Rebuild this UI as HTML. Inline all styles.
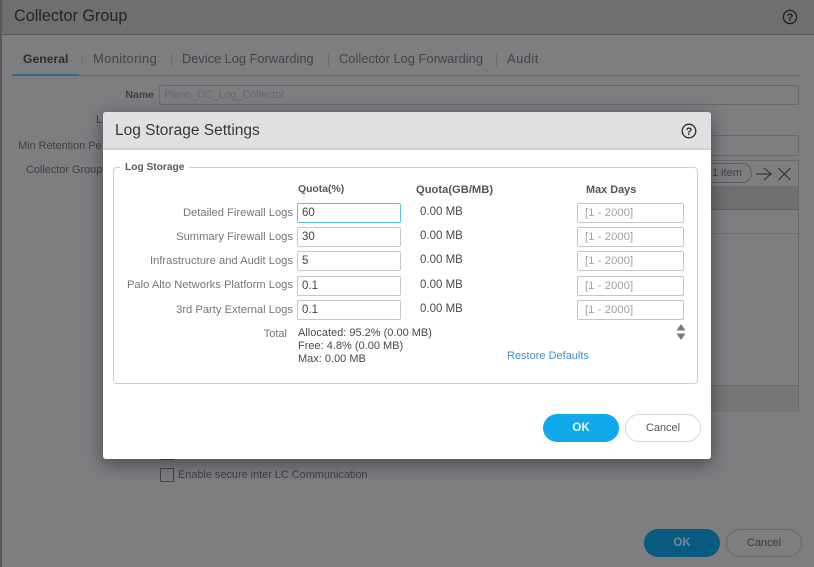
<!DOCTYPE html>
<html><head><meta charset="utf-8"><style>
html,body{margin:0;padding:0}
body{width:814px;height:567px;overflow:hidden;position:relative;background:#7f7d80;font-family:"Liberation Sans",sans-serif;font-size:11px;color:#333}
div,span{position:absolute;white-space:nowrap;box-sizing:border-box}
.tab{top:51px;font-size:12.9px;line-height:16px;color:#454447}
.sep{top:53px;width:1px;height:14px;background:#706f72}
.bl{text-align:right;line-height:14px;color:#403f42;font-size:10.9px}
.lbl{right:521px;text-align:right;line-height:14px;color:#77767a;font-size:11.2px;margin-top:1px}
.inp{left:297px;width:104px;height:20px;border:1px solid #c9c8c8;border-radius:2px;background:#fff;padding-left:4px;line-height:18px;color:#444;font-size:11.5px}
.mb{left:420px;line-height:14px;color:#4a4a4a;font-size:11.5px}
.md{left:577px;width:107px;height:20px;border:1px solid #c9c4c4;border-radius:2px;background:#fff;padding-left:7px;line-height:19px;color:#a3a3a3;font-size:11.4px}
.hd{top:183px;line-height:14px;font-weight:bold;color:#555}
.tot{left:298px;line-height:13px;color:#4a4a4a;font-size:11px}
</style></head><body>
<div style="left:0;top:0;width:2px;height:567px;background:#59585a"></div>
<div style="left:2px;top:0;width:812px;height:35px;background:#6f6e70;border-bottom:1px solid #59585b"></div>
<div style="left:14px;top:6px;font-size:16.2px;line-height:20px;color:#242326">Collector Group</div>
<svg style="position:absolute;left:782px;top:8.5px" width="16" height="16" viewBox="0 0 16 16"><circle cx="8" cy="8" r="6.6" fill="none" stroke="#1f1f21" stroke-width="1.3"/><text x="8" y="11.8" text-anchor="middle" font-family="Liberation Sans" font-size="11" font-weight="bold" fill="#1f1f21">?</text></svg>

<div class="tab" style="left:23px;font-weight:bold;color:#2e2d30;font-size:12.2px">General</div>
<div class="sep" style="left:82px"></div>
<div class="tab" style="left:93px;letter-spacing:.4px">Monitoring</div>
<div class="sep" style="left:171px"></div>
<div class="tab" style="left:182px;font-size:12.8px">Device Log Forwarding</div>
<div class="sep" style="left:328px"></div>
<div class="tab" style="left:339px">Collector Log Forwarding</div>
<div class="sep" style="left:496px"></div>
<div class="tab" style="left:507px;letter-spacing:.5px">Audit</div>
<div style="left:12px;top:75px;width:787px;height:1px;background:#676669"></div>
<div style="left:12px;top:74px;width:67px;height:2px;background:#2b6e86"></div>

<div class="bl" style="left:100px;width:54px;top:88px;font-weight:bold;font-size:10.5px">Name</div>
<div style="left:159px;top:85px;width:640px;height:20px;border:1px solid #6a696c;border-radius:2px;color:#66656a;font-size:10.7px;line-height:18px;padding-left:4px">Plano_DC_Log_Collector</div>
<div class="bl" style="left:96px;top:113px">L</div>
<div class="bl" style="left:18px;top:139px">Min Retention Pe</div>
<div class="bl" style="left:26px;top:163px">Collector Group</div>
<div style="left:700px;top:135px;width:99px;height:21px;border:1px solid #6a696c;border-radius:2px"></div>
<div style="left:700px;top:160px;width:99px;height:252px;border:1px solid #69686b"></div>
<div style="left:700px;top:186px;width:98px;height:24px;background:#6f6e70;border-bottom:1px solid #616063"></div>
<div style="left:700px;top:233px;width:98px;height:1px;background:#6f6e71"></div>
<div style="left:700px;top:385px;width:98px;height:27px;background:#767577;border-top:1px solid #69686b"></div>
<div style="left:690px;top:163px;width:62px;height:20px;border:1px solid #5e5d60;border-radius:10px"></div>
<div style="left:712px;top:166px;line-height:15px;font-size:11px;color:#3c3b3e">1 item</div>
<svg style="position:absolute;left:755px;top:165px" width="40" height="18" viewBox="0 0 40 18" fill="none" stroke="#2d2c2f" stroke-width="1"><path d="M1 9H16M9 3l7 6-7 6"/><path d="M23.500 3l12 12M35.500 3l-12 12"/></svg>

<div style="left:160px;top:468px;width:14px;height:14px;border:1px solid #444346;border-radius:1px"></div>
<div style="left:160px;top:452px;width:14px;height:8px;border:1px solid #444346"></div>
<div class="bl" style="left:178px;top:468px">Enable secure inter LC Communication</div>

<div style="left:644px;top:529px;width:76px;height:28px;border-radius:14px;background:#075a80;color:#6f8a98;font-weight:bold;text-align:center;line-height:28px;font-size:11.5px">OK</div>
<div style="left:726px;top:529px;width:76px;height:28px;border-radius:14px;border:1px solid #69686b;color:#3a393c;text-align:center;line-height:26px;font-size:11px">Cancel</div>

<!-- dialog -->
<div style="left:103px;top:112px;width:608px;height:347px;background:#fff;border-radius:3px;box-shadow:0 5px 18px rgba(30,30,32,.55)"></div>
<div style="left:103px;top:112px;width:608px;height:38px;background:#e0e0e2;border-bottom:2px solid #d2d2d4;border-radius:3px 3px 0 0"></div>
<div style="left:115px;top:121px;font-size:15.5px;line-height:20px;color:#38383b">Log Storage Settings</div>
<svg style="position:absolute;left:681px;top:123px" width="16" height="16" viewBox="0 0 16 16"><circle cx="8" cy="8" r="6.8" fill="none" stroke="#2c2c2e" stroke-width="1.3"/><text x="8" y="11.8" text-anchor="middle" font-family="Liberation Sans" font-size="11" font-weight="bold" fill="#2c2c2e">?</text></svg>

<div style="left:113px;top:167px;width:585px;height:217px;border:1px solid #cfcfcf;border-radius:4px"></div>
<div style="left:120px;top:161px;background:#fff;padding:0 5px;line-height:14px;color:#5a5a5d;font-weight:bold;font-size:10.2px">Log Storage</div>

<div class="hd" style="left:298px;font-size:10.4px">Quota(%)</div>
<div class="hd" style="left:416px;font-size:11.2px">Quota(GB/MB)</div>
<div class="hd" style="left:586px;font-size:10.9px">Max Days</div>

<div class="lbl" style="top:205px">Detailed Firewall Logs</div>
<div class="inp" style="top:203px;border-color:#5cc6d0">60</div>
<div class="mb" style="top:205px">0.00 MB</div>
<div class="md" style="top:203px">[1 - 2000]</div>

<div class="lbl" style="top:229px">Summary Firewall Logs</div>
<div class="inp" style="top:227px">30</div>
<div class="mb" style="top:229px">0.00 MB</div>
<div class="md" style="top:227px">[1 - 2000]</div>

<div class="lbl" style="top:253px">Infrastructure and Audit Logs</div>
<div class="inp" style="top:251px">5</div>
<div class="mb" style="top:253px">0.00 MB</div>
<div class="md" style="top:251px">[1 - 2000]</div>

<div class="lbl" style="top:277px">Palo Alto Networks Platform Logs</div>
<div class="inp" style="top:276px">0.1</div>
<div class="mb" style="top:278px">0.00 MB</div>
<div class="md" style="top:276px">[1 - 2000]</div>

<div class="lbl" style="top:302px">3rd Party External Logs</div>
<div class="inp" style="top:300px">0.1</div>
<div class="mb" style="top:302px">0.00 MB</div>
<div class="md" style="top:300px">[1 - 2000]</div>

<div class="lbl" style="top:326px;right:527px;font-size:11px">Total</div>
<div class="tot" style="top:327px">Allocated: 95.2% (0.00 MB)</div>
<div class="tot" style="top:340px">Free: 4.8% (0.00 MB)</div>
<div class="tot" style="top:353px">Max: 0.00 MB</div>

<svg style="position:absolute;left:675px;top:323px" width="12" height="19" viewBox="0 0 12 19"><path d="M6 1L10.500 7.500H1.500Z" fill="#77777a"/><path d="M1.500 10.500H10.500L6 17Z" fill="#77777a"/></svg>
<div style="left:507px;top:349px;line-height:14px;color:#3f8fc9;font-size:11px">Restore Defaults</div>

<div style="left:543px;top:414px;width:76px;height:28px;border-radius:14px;background:#11a8ec;color:#eaf6fd;font-weight:bold;text-align:center;line-height:28px;font-size:11.5px">OK</div>
<div style="left:625px;top:414px;width:76px;height:28px;border-radius:14px;border:1px solid #d5d5d5;background:#fff;color:#57575a;text-align:center;line-height:26px;font-size:11px">Cancel</div>
</body></html>
